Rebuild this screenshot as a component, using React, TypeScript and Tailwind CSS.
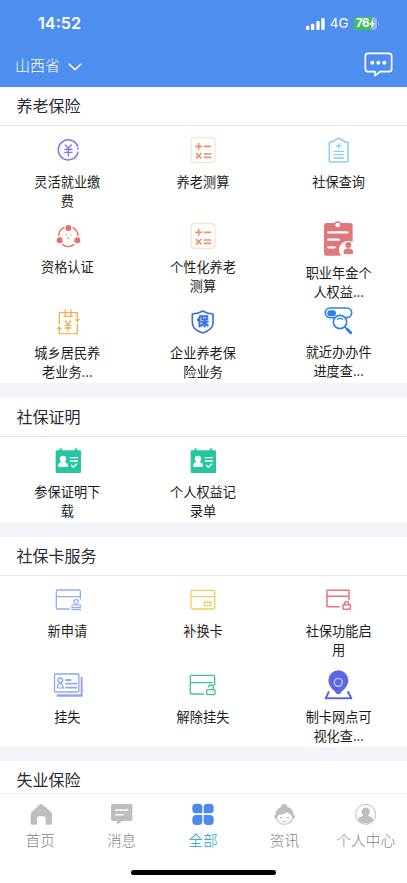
import React from "react";

type Service = { label: string; icon: React.ReactNode; size?: "large" | "raised" };
type Section = { title: string; items: Service[] };

const Icon = ({ children, color }: { children: React.ReactNode; color: string }) => (
  <svg viewBox="0 0 120 120" className="h-10 w-10 shrink-0" fill="none" stroke={color} strokeWidth={4} strokeLinecap="round" strokeLinejoin="round">
    {children}
  </svg>
);

const CoinIcon = () => (
  <Icon color="#7d70ee">
    <path d="M89 49A30 30 0 1 0 90 67" strokeWidth={4.5} />
    <path d="M90 54v4" />
    <path d="M52 45l9 10 9-10M61 55v22M50 58h22M50 67h22" />
  </Icon>
);

const CalcIcon = () => (
  <Icon color="#ec9268">
    <rect x="24" y="23" width="72" height="74" rx="9" stroke="#fce0d2" />
    <path d="M37 49h20M47 39v20M62 49h23M39 69l16 16M55 69L39 85M62 72h23M62 82h23" strokeWidth={5} strokeLinecap="butt" />
  </Icon>
);

const QueryIcon = () => (
  <Icon color="#8bcdf2">
    <path d="M34 36h6c3 0 3-5 7-5 4 0 7-6 12-6s8 6 12 6c4 0 4 5 7 5h6q3 0 3 3v53q0 4-4 4H35q-4 0-4-4V39q0-3 3-3z" strokeWidth={4.5} />
    <path d="M59 42v12M53 48h12M45 64h28M45 74h28M45 84h28" />
  </Icon>
);

const VerifyIcon = () => (
  <Icon color="#ef6c6e">
    <path d="M47 35A30 30 0 0 0 32 59M75 35a30 30 0 0 1 15 24M44 86a30 30 0 0 0 34 0" />
    <g fill="#ef6c6e" stroke="none">
      <circle cx="61" cy="36" r="9" />
      <circle cx="35" cy="73" r="9" />
      <circle cx="88" cy="73" r="9" />
    </g>
    <path d="M54 57h2M67 57h2M58 66q3 4 6 0" strokeWidth={3} />
  </Icon>
);

const AnnuityIcon = () => (
  <Icon color="#fff">
    <rect x="15" y="12" width="86" height="98" rx="8" fill="#df787b" stroke="none" />
    <circle cx="56" cy="18" r="9" fill="#fff" stroke="#df787b" strokeWidth={4} />
    <path d="M28 40h57M28 62h31M28 85h19" strokeWidth={7} />
    <circle cx="88" cy="93" r="28" fill="#fff" stroke="none" />
    <g fill="#df787b" stroke="none">
      <circle cx="88" cy="78" r="9" />
      <path d="M74 103v-5q0-7 7-8l7-3 7 3q7 1 7 8v5q0 2-2 2H76q-2 0-2-2z" />
    </g>
  </Icon>
);

const ResidentIcon = () => (
  <Icon color="#efb252">
    <path d="M43 32H34v34M81 32h7v23M88 66v29H75M34 76v19h34M52 23v18M69 23v18M48 43h26M43 32h38" />
    <path d="M83 52l5 6 6-6M28 81l6-6 6 6" strokeWidth={3.5} />
    <path d="M52 57l8 10 8-10M60 67v20M51 70h18M51 78h18" />
  </Icon>
);

const ShieldIcon = () => (
  <Icon color="#3c72df">
    <path d="M59 27q12 8 31 9v27q0 20-31 30Q28 83 28 63V36q19-1 31-9z" strokeWidth={5} />
    <text x="59" y="73" textAnchor="middle" fill="#3c72df" stroke="#3c72df" strokeWidth={1} className="font-['Noto_Sans_CJK_SC',sans-serif] text-[36px] font-black">保</text>
  </Icon>
);

const NearbyIcon = () => (
  <Icon color="#2f7fef">
    <rect x="19" y="24" width="79" height="29" rx="14.5" strokeWidth={5} />
    <rect x="25" y="31" width="26" height="17" rx="8.5" fill="#2f7fef" stroke="none" />
    <circle cx="63" cy="66" r="20" fill="#fff" strokeWidth={5} />
    <path d="M55 58q8-6 16 0" strokeWidth={3.5} />
    <path d="M78 81l6 6" strokeWidth={5} />
    <path d="M84 87l11 11" strokeWidth={9} />
  </Icon>
);

const CertificateIcon = () => (
  <Icon color="#fff">
    <rect x="23" y="28" width="76" height="68" rx="3" fill="#26c7a0" stroke="none" />
    <path d="M38 25v6M84 25v6" stroke="#26c7a0" strokeWidth={7} />
    <g fill="#fff" stroke="none">
      <circle cx="45" cy="54" r="9.5" />
      <path d="M40 61h10v3q9 1 10 10 0 4-4 4H34q-4 0-4-4 1-9 10-10z" />
    </g>
    <path d="M67 50h21M67 60h21M70 73l6 6 10-10" />
  </Icon>
);

const ApplyIcon = () => (
  <Icon color="#93adf0">
    <path d="M63 87H28q-3 0-3-3V33q0-3 3-3h66q3 0 3 3v23M25 50h71" />
    <path d="M82 75v-4q-5-3-5-6 0-6 7-6t7 6q0 3-5 6v4M72 83v-8h25v8zM71 89h27" strokeWidth={3.5} />
  </Icon>
);

const ReplaceIcon = () => (
  <Icon color="#f2cf5a">
    <rect x="24" y="31" width="71" height="56" rx="5" />
    <path d="M24 50h71M64 66h20v11H64z" />
  </Icon>
);

const EnableIcon = () => (
  <Icon color="#ed7375">
    <path d="M61 80H24V31h66v28M24 49h66" strokeWidth={4.5} />
    <rect x="72" y="74" width="22" height="14" rx="2" strokeWidth={4.5} />
    <path d="M77 73v-3q0-5 6-5t6 5v3" strokeWidth={4.5} />
  </Icon>
);

const LossIcon = () => (
  <Icon color="#91a7ee">
    <path d="M26 88h72V35h6v60H26z" fill="#91a7ee" stroke="none" />
    <rect x="19.5" y="27" width="73" height="54" rx="2" fill="#fff" />
    <circle cx="37" cy="46" r="7" />
    <path d="M28 69q0-11 9-15 9 4 9 15z" strokeWidth={3.5} />
    <path d="M54 45h14M54 56h31M54 68h31" strokeWidth={5.5} />
  </Icon>
);

const UnlockIcon = () => (
  <Icon color="#43c19e">
    <path d="M62 87H25q-3 0-3-3V34q0-3 3-3h67q3 0 3 3v26M22 53h65" />
    <rect x="71" y="74" width="25" height="15" rx="3" />
    <path d="M76 66q2-6 8-6 7 0 7 7v6" />
  </Icon>
);

const MapIcon = () => (
  <Icon color="#5c66e2">
    <path d="M58 88q-6 0-11-9Q28 63 28 46a30 30 0 0 1 60 0q0 17-19 33-5 9-11 9z" fill="#5c66e2" stroke="none" />
    <circle cx="58" cy="52" r="12" stroke="#c6cbfa" />
    <path d="M30 79l-10 21h77L86 79" strokeWidth={6} strokeLinecap="butt" />
  </Icon>
);

const sections: Section[] = [
  {
    title: "养老保险",
    items: [
      { label: "灵活就业缴费", icon: <CoinIcon /> },
      { label: "养老测算", icon: <CalcIcon /> },
      { label: "社保查询", icon: <QueryIcon /> },
      { label: "资格认证", icon: <VerifyIcon /> },
      { label: "个性化养老测算", icon: <CalcIcon /> },
      { label: "职业年金个人权益...", icon: <AnnuityIcon />, size: "large" },
      { label: "城乡居民养老业务...", icon: <ResidentIcon /> },
      { label: "企业养老保险业务", icon: <ShieldIcon /> },
      { label: "就近办办件进度查...", icon: <NearbyIcon />, size: "raised" },
    ],
  },
  {
    title: "社保证明",
    items: [
      { label: "参保证明下载", icon: <CertificateIcon /> },
      { label: "个人权益记录单", icon: <CertificateIcon /> },
    ],
  },
  {
    title: "社保卡服务",
    items: [
      { label: "新申请", icon: <ApplyIcon /> },
      { label: "补换卡", icon: <ReplaceIcon /> },
      { label: "社保功能启用", icon: <EnableIcon /> },
      { label: "挂失", icon: <LossIcon /> },
      { label: "解除挂失", icon: <UnlockIcon /> },
      { label: "制卡网点可视化查...", icon: <MapIcon /> },
    ],
  },
  { title: "失业保险", items: [] },
];

const cellStyles = {
  normal: "gap-[1.5px] pt-1",
  large: "gap-1 pt-[7.5px]",
  raised: "gap-[1.5px] pt-[2.5px]",
};

const tabs = [
  {
    label: "首页",
    icon: <path d="M33 7q3-2 6 0l27 23q3 3 3 7v27q0 4-4 4H50V49q0-6-6-6H30q-6 0-6 6v19H9q-4 0-4-4V37q0-4 3-7z" />,
  },
  {
    label: "消息",
    icon: (
      <>
        <path d="M8 6h54q5 0 5 5v41q0 5-5 5H36L21 68V57H8q-5 0-5-5V11q0-5 5-5z" />
        <path d="M17 24h37M17 38h22" stroke="#fff" strokeWidth={4.5} strokeLinecap="round" />
      </>
    ),
  },
  {
    label: "全部",
    icon: (
      <>
        <path d="M15 5h8q11 0 11 11v18H16Q4 34 4 23v-7Q4 5 15 5z" />
        <path d="M57 5h-8q-11 0-11 11v18h18q12 0 12-11v-7Q68 5 57 5z" />
        <path d="M15 69h8q11 0 11-11V39H16Q4 39 4 51v7q0 11 11 11z" />
        <path d="M57 69h-8q-11 0-11-11V39h18q12 0 12 12v7q0 11-11 11z" />
      </>
    ),
  },
  {
    label: "资讯",
    icon: (
      <>
        <circle cx="34" cy="42" r="25" fill="#fff" stroke="#bebebe" strokeWidth={3} />
        <path d="M25 14q0-8 9-8t9 8q17 5 19 24 4 1 4 6 0 6-7 6-1-9-8-15-5 1-9-4-9 8-25 7-4 4-5 12-8 0-8-6 0-5 3-6 3-19 18-24z" />
        <circle cx="24" cy="47" r="3" />
        <circle cx="45" cy="47" r="3" />
        <path d="M28 57q6 5 12 0M59 52q-3 8-12 8" fill="none" stroke="#bebebe" strokeWidth={3} />
      </>
    ),
  },
  {
    label: "个人中心",
    icon: (
      <>
        <circle cx="35" cy="37" r="30" fill="none" stroke="#bcbcbc" strokeWidth={3} />
        <circle cx="35" cy="29" r="12.5" />
        <path d="M27 37h16v5q15 3 15 13-9 9-23 9t-23-9q0-10 15-13z" />
      </>
    ),
  },
];

export default function App() {
  return (
    <div className="flex h-[883px] w-full flex-col overflow-hidden bg-white font-['Noto_Sans_CJK_SC',sans-serif]">
      <header className="h-[87px] shrink-0 bg-[#4e8eee] text-white">
        {/* Status bar */}
        <div className="flex h-[47px] items-center justify-between pr-[28px] pl-[38px] font-[Inter,sans-serif]">
          <span className="text-[16.2px] font-semibold">14:52</span>
          <div className="flex items-center">
            <svg viewBox="0 0 57 36" className="mr-[5px] h-3 w-[19px]" fill="#fff">
              <rect x="0" y="23" width="10" height="13" rx="3" />
              <rect x="15" y="17" width="10" height="19" rx="3" />
              <rect x="31" y="9" width="10" height="27" rx="3" />
              <rect x="46" y="0" width="10" height="36" rx="3" />
            </svg>
            <span className="mr-[5px] text-[13.5px] leading-none">4G</span>
            <div className="flex h-[13px] w-[23px] items-center rounded-[4px] bg-[linear-gradient(90deg,#3cc15e_78%,#91b9f4_78%)] pl-[2.5px]">
              <span className="text-[11.5px] leading-none font-bold tracking-[-0.5px]">76</span>
              <svg viewBox="0 0 18 30" className="h-[10px] w-[6px] shrink-0" fill="#fff">
                <path d="M12 0L1 17h7L5 30 17 12h-7z" />
              </svg>
            </div>
            <div className="ml-px h-1 w-[1.5px] rounded-r-full bg-[#83b0f4]" />
          </div>
        </div>
        <div className="flex h-[35px] items-center justify-between pr-[14px] pl-[15px]">
          <div className="flex items-center gap-2">
            <span className="text-[15px] leading-none font-light">山西省</span>
            <svg viewBox="0 0 42 24" className="mt-1 h-2 w-[14px]" fill="none" stroke="#fff" strokeWidth={4.5} strokeLinecap="round">
              <path d="M3 3l18 17L39 3" />
            </svg>
          </div>
          <svg viewBox="0 0 87 75" className="mt-[-1px] h-[25px] w-[29px]" fill="none" stroke="#fff" strokeWidth={5} strokeLinejoin="round">
            <path d="M12 4h63q8 0 8 8v39q0 8-8 8H48L33 71V59H12q-8 0-8-8V12q0-8 8-8z" />
            <g fill="#fff" stroke="none">
              <circle cx="25" cy="32" r="6" />
              <circle cx="43" cy="32" r="6" />
              <circle cx="61" cy="32" r="6" />
            </g>
          </svg>
        </div>
      </header>

      <main className="flex min-h-0 flex-1 flex-col gap-[14.25px] overflow-hidden bg-[#f4f5fb]">
        {sections.map((section) => (
          <section key={section.title} className="shrink-0 bg-white">
            <h2 className="flex h-[39px] items-center border-b border-[#e4e5e8] pb-[2px] pl-[16.5px] text-[16px] leading-none text-[#292838]">
              {section.title}
            </h2>
            <div className="grid auto-rows-[85.75px] grid-cols-3">
              {section.items.map((item) => (
                <div key={item.label} className={`flex flex-col items-center ${cellStyles[item.size ?? "normal"]}`}>
                  {item.icon}
                  <span className="mr-px w-[68px] text-center text-[13.2px] leading-[19px] text-[#1c1c1c]">{item.label}</span>
                </div>
              ))}
            </div>
          </section>
        ))}
      </main>

      <nav className="flex h-[90px] shrink-0 flex-col items-center border-t border-[#ececee] bg-white">
        <div className="grid w-full grid-cols-5 pt-2">
          {tabs.map((tab) => {
            const active = tab.label === "全部";
            return (
              <div key={tab.label} className="flex flex-col items-center gap-1">
                <svg viewBox="0 0 72 72" className={`h-6 w-6 ${active ? "fill-[#4d8aea]" : "fill-[#bebebe]"}`}>
                  {tab.icon}
                </svg>
                <span className={`mr-px text-[14.7px] leading-5 font-light whitespace-nowrap ${active ? "text-[#1b9bd3]" : "text-[#858585]"}`}>
                  {tab.label}
                </span>
              </div>
            );
          })}
        </div>
        <div className="mt-5 h-[5px] w-[145px] rounded-full bg-black" />
      </nav>
    </div>
  );
}
